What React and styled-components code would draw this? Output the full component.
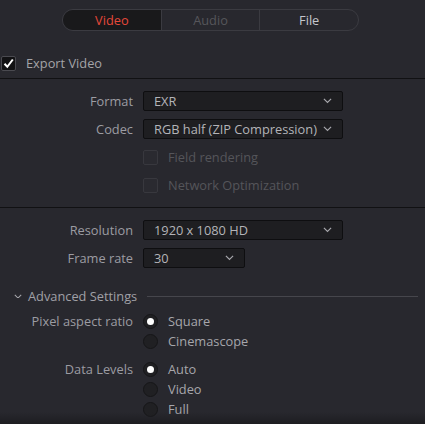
import React from "react";
import styled, { createGlobalStyle } from "styled-components";

const Global = createGlobalStyle`
  html, body { margin: 0; padding: 0; background: #28282e; }
  body { font-family: "Open Sans", "Noto Sans", sans-serif; font-size: 12.8px; color: #9c9ca0; overflow: hidden; }
`;

const Page = styled.div`
  display: flex;
  flex-direction: column;
  width: 425px;
  height: 424px;
  background: #28282e;
  position: relative;
`;

const TabBar = styled.div`
  margin: 9px 0 0 62px;
  display: flex;
  width: 297px;
  height: 22px;
  box-sizing: border-box;
  border: 1px solid #3b3b41;
  border-radius: 11px;
  overflow: hidden;
`;

const Tab = styled.div`
  flex: 1;
  display: flex;
  align-items: center;
  justify-content: center;
  font-size: 12.8px;
  background: ${(p) => (p.$active ? "#19191b" : "transparent")};
  color: ${(p) => (p.$active ? "#e5483a" : p.$dim ? "#56565b" : "#c4c6cc")};
  & + & { border-left: 1px solid #3b3b41; }
`;

const ExportRow = styled.label`
  display: flex;
  align-items: center;
  gap: 10px;
  margin-top: 24px;
  margin-left: 1px;
  height: 16px;
  font-size: 12.8px;
  color: #a4a4a8;
`;

const Check = styled.span`
  width: 15px;
  height: 15px;
  box-sizing: border-box;
  border-radius: 2px;
  display: flex;
  align-items: center;
  justify-content: center;
  border: 1px solid ${(p) => (p.$disabled ? "#38383e" : "#4a4a50")};
  background: ${(p) => (p.$disabled ? "#2a2a30" : "#121214")};
`;

const Divider = styled.div`
  height: 1px;
  background: #111113;
  margin-top: ${(p) => p.$mt}px;
`;

const Section = styled.div`
  display: flex;
  flex-direction: column;
  gap: 8px;
  padding-top: ${(p) => p.$pt}px;
`;

const Row = styled.div`
  display: grid;
  grid-template-columns: 133px auto;
  column-gap: 10px;
  align-items: ${(p) => (p.$top ? "start" : "center")};
  min-height: 20px;
`;

const Label = styled.div`
  text-align: right;
  color: #9c9ca2;
  font-size: 12.8px;
  line-height: 20px;
  white-space: nowrap;
`;

const Select = styled.div`
  width: ${(p) => p.$w}px;
  height: 20px;
  box-sizing: border-box;
  border: 1px solid #0e0e10;
  border-radius: 2px;
  background: #1e1e21;
  display: flex;
  align-items: center;
  justify-content: space-between;
  padding: 0 10px 0 10px;
  color: #b4b4b8;
  font-size: 12.8px;
  white-space: nowrap;
`;

const Option = styled.div`
  display: flex;
  align-items: center;
  gap: 10px;
  height: 20px;
  font-size: 12.8px;
  color: ${(p) => (p.$disabled ? "#55555a" : "#a6a6ab")};
`;

const Radio = styled.span`
  width: 15px;
  height: 15px;
  box-sizing: border-box;
  border-radius: 50%;
  border: 1px solid #161618;
  background: #202023;
  display: flex;
  align-items: center;
  justify-content: center;
  &::after {
    content: "";
    display: ${(p) => (p.$on ? "block" : "none")};
    width: 7px;
    height: 7px;
    border-radius: 50%;
    background: #fff;
  }
`;

const Stack = styled.div`
  display: flex;
  flex-direction: column;
`;

const Advanced = styled.div`
  display: flex;
  align-items: center;
  height: 20px;
  margin-top: 18px;
  margin-bottom: 5px;
  padding-left: 14px;
  padding-right: 7px;
  color: #a0a0a6;
  font-size: 12.8px;
`;

const AdvText = styled.span`
  margin-left: 6px;
  margin-right: 10px;
  white-space: nowrap;
`;

const AdvLine = styled.div`
  flex: 1;
  height: 1px;
  background: #46464c;
`;

const Shade = styled.div`
  position: absolute;
  left: 0;
  right: 0;
  bottom: 0;
  height: 12px;
  background: linear-gradient(to bottom, rgba(30,30,34,0), #1d1d21);
  pointer-events: none;
`;

const Chevron = ({ size = 9 }) => (
  <svg width={size} height={size * 0.6} viewBox="0 0 10 6" fill="none">
    <path d="M1 1l4 4 4-4" stroke="#a8a8ad" strokeWidth="1.3" />
  </svg>
);

const Tick = () => (
  <svg width="11" height="11" viewBox="0 0 11 11">
    <path d="M1.5 5.8l2.8 3L9.8 1.5" stroke="#fff" strokeWidth="2" fill="none" />
  </svg>
);

export default function App() {
  return (
    <Page>
      <Global />
      <TabBar>
        <Tab $active>Video</Tab>
        <Tab $dim>Audio</Tab>
        <Tab>File</Tab>
      </TabBar>

      <ExportRow>
        <Check><Tick /></Check>
        Export Video
      </ExportRow>

      <Divider $mt={7} />

      <Section $pt={12}>
        <Row>
          <Label>Format</Label>
          <Select $w={200}>EXR<Chevron /></Select>
        </Row>
        <Row>
          <Label>Codec</Label>
          <Select $w={200}>RGB half (ZIP Compression)<Chevron /></Select>
        </Row>
        <Row>
          <span />
          <Option $disabled><Check $disabled />Field rendering</Option>
        </Row>
        <Row>
          <span />
          <Option $disabled><Check $disabled />Network Optimization</Option>
        </Row>
      </Section>

      <Divider $mt={12} />

      <Section $pt={12}>
        <Row>
          <Label>Resolution</Label>
          <Select $w={200}>1920 x 1080 HD<Chevron /></Select>
        </Row>
        <Row>
          <Label>Frame rate</Label>
          <Select $w={102}>30<Chevron /></Select>
        </Row>
      </Section>

      <Advanced>
        <Chevron size={8} />
        <AdvText>Advanced Settings</AdvText>
        <AdvLine />
      </Advanced>

      <Section $pt={0}>
        <Row $top>
          <Label>Pixel aspect ratio</Label>
          <Stack>
            <Option><Radio $on />Square</Option>
            <Option><Radio />Cinemascope</Option>
          </Stack>
        </Row>
        <Row $top>
          <Label>Data Levels</Label>
          <Stack>
            <Option><Radio $on />Auto</Option>
            <Option><Radio />Video</Option>
            <Option><Radio />Full</Option>
          </Stack>
        </Row>
      </Section>

      <Shade />
    </Page>
  );
}
